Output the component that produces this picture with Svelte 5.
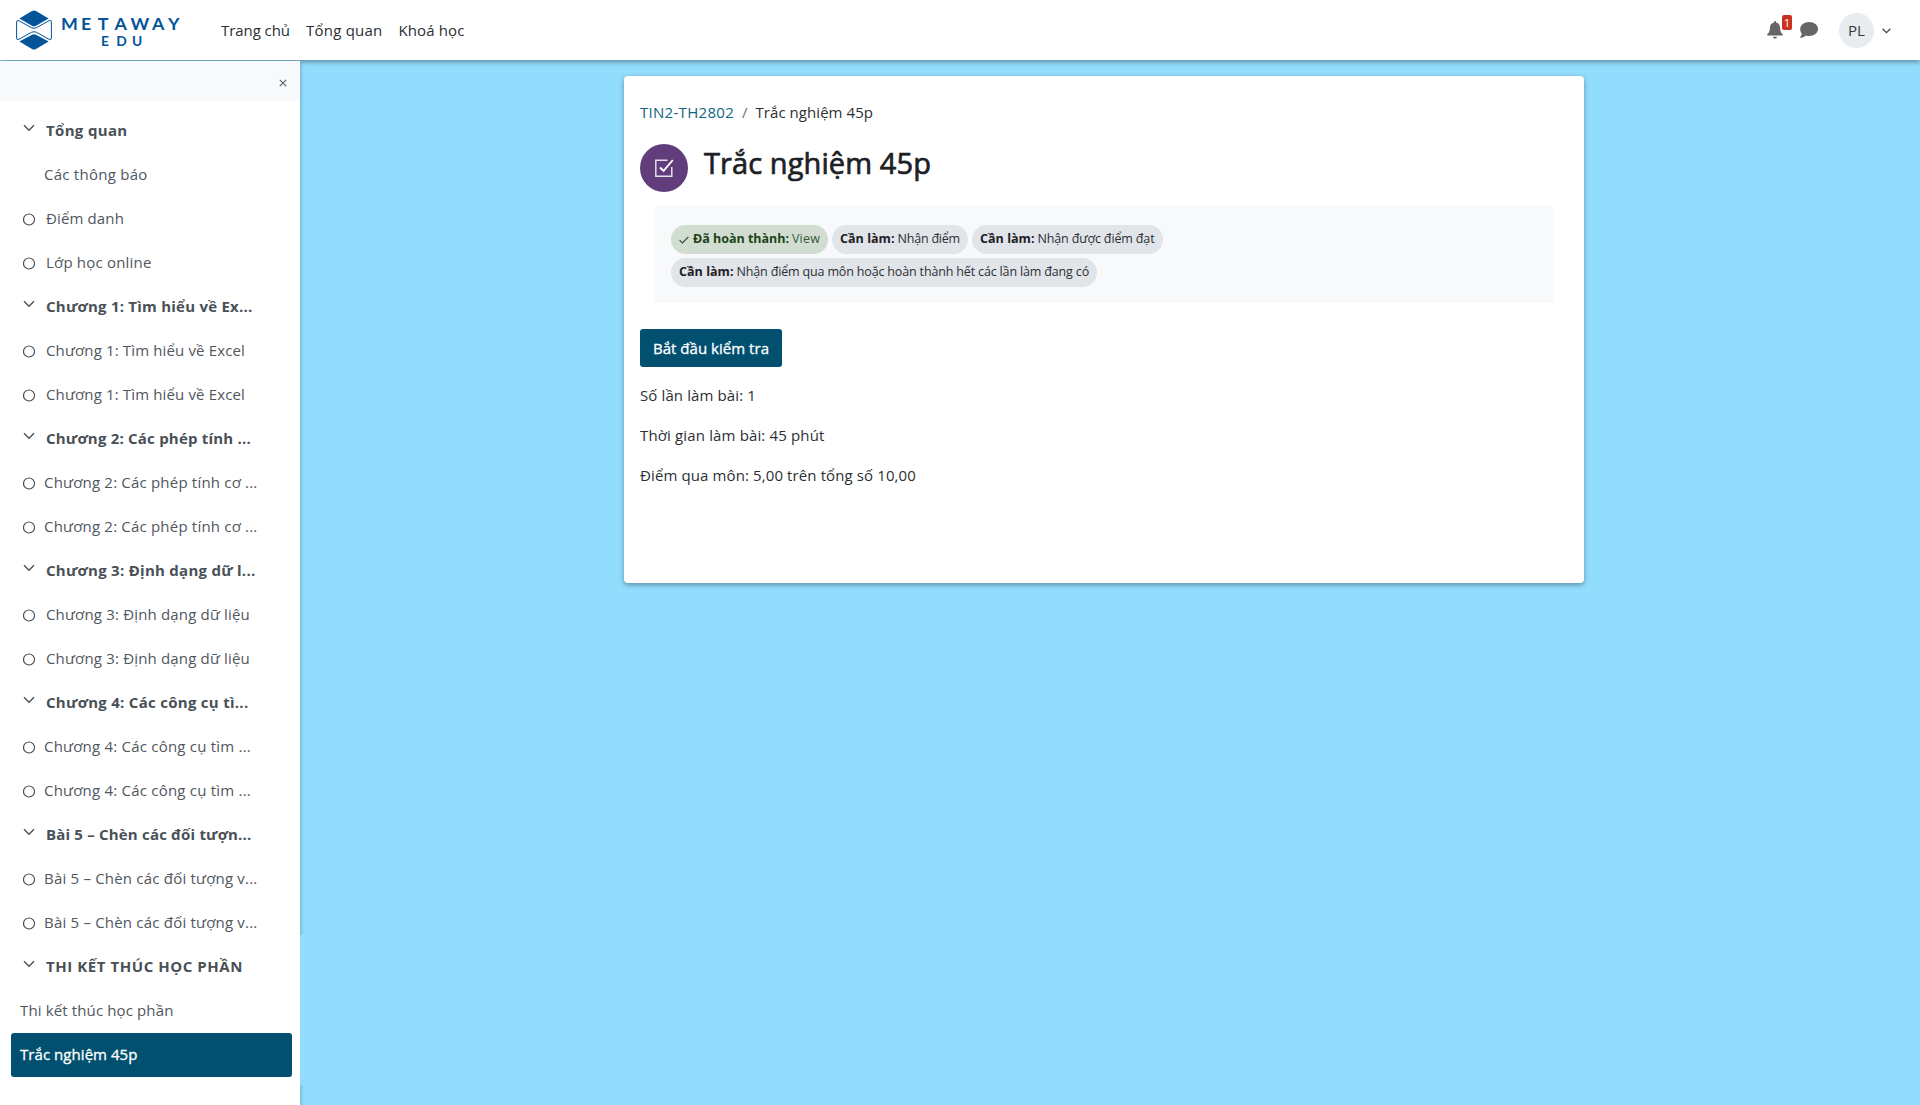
<script>
  // Spreads a label evenly over the given width in pixels.
  function span(node, width) {
    const natural = node.getBoundingClientRect().width;
    const count = [...node.textContent].length;
    node.style.letterSpacing = `${(width - natural) / count}px`;
  }

  const nav = [
    { text: 'Trang chủ', w: 69 },
    { text: 'Tổng quan', w: 76.5 },
    { text: 'Khoá học', w: 66 }
  ];

  const rows = [
    { kind: 'section', text: 'Tổng quan', w: 81.5 },
    { kind: 'plain', text: 'Các thông báo', w: 103.5 },
    { kind: 'todo', text: 'Điểm danh', w: 78 },
    { kind: 'todo', text: 'Lớp học online', w: 105.5 },
    { kind: 'section', text: 'Chương 1: Tìm hiểu về Ex...', w: 206.5 },
    { kind: 'todo', text: 'Chương 1: Tìm hiểu về Excel', w: 199 },
    { kind: 'todo', text: 'Chương 1: Tìm hiểu về Excel', w: 199 },
    { kind: 'section', text: 'Chương 2: Các phép tính ...', w: 205 },
    { kind: 'todo tight', text: 'Chương 2: Các phép tính cơ ...', w: 213.5 },
    { kind: 'todo tight', text: 'Chương 2: Các phép tính cơ ...', w: 213.5 },
    { kind: 'section', text: 'Chương 3: Định dạng dữ l...', w: 209.5 },
    { kind: 'todo', text: 'Chương 3: Định dạng dữ liệu', w: 204 },
    { kind: 'todo', text: 'Chương 3: Định dạng dữ liệu', w: 204 },
    { kind: 'section', text: 'Chương 4: Các công cụ tì...', w: 202.5 },
    { kind: 'todo tight', text: 'Chương 4: Các công cụ tìm ...', w: 207 },
    { kind: 'todo tight', text: 'Chương 4: Các công cụ tìm ...', w: 207 },
    { kind: 'section', text: 'Bài 5 – Chèn các đối tượn...', w: 205.5 },
    { kind: 'todo tight', text: 'Bài 5 – Chèn các đối tượng v...', w: 213.5 },
    { kind: 'todo tight', text: 'Bài 5 – Chèn các đối tượng v...', w: 213.5 },
    { kind: 'section', text: 'THI KẾT THÚC HỌC PHẦN', w: 197 },
    { kind: 'bare', text: 'Thi kết thúc học phần', w: 153.5 },
    { kind: 'bare active', text: 'Trắc nghiệm 45p', w: 117.5 }
  ];

  const badges = [
    [
      { done: true, label: 'Đã hoàn thành:', lw: 96, text: 'View', w: 28 },
      { label: 'Cần làm:', lw: 54.5, text: 'Nhận điểm', w: 62.5 },
      { label: 'Cần làm:', lw: 54.5, text: 'Nhận được điểm đạt', w: 117 }
    ],
    [
      { label: 'Cần làm:', lw: 54.5, text: 'Nhận điểm qua môn hoặc hoàn thành hết các lần làm đang có', w: 352.5 }
    ]
  ];

  const info = [
    { text: 'Số lần làm bài: 1', w: 116 },
    { text: 'Thời gian làm bài: 45 phút', w: 184.5 },
    { text: 'Điểm qua môn: 5,00 trên tổng số 10,00', w: 276 }
  ];
</script>

<div class="page">
  <header class="topbar">
    <svg class="logo" width="168" height="42" viewBox="0 0 168 42">
      <g fill="#04549a">
        <path d="M3.4 9.600 16 2Q18 .9 20 2L32.600 9.600 20 16.800Q18 17.900 16 16.800Z" />
        <path d="M3.400 32.400 16 25.700Q18 24.700 20 25.700L32.600 32.400 20 40Q18 41.100 16 40Z" />
      </g>
      <path fill="none" stroke="#04549a" stroke-width="1" stroke-linejoin="round" d="M2.900 11.700Q.6 10.600 .6 13V29Q.6 31.400 2.900 30.300L15.500 23.300Q18 22.100 20.500 23.300L33.100 30.300Q35.400 31.400 35.400 29V13Q35.400 10.600 33.100 11.700L20.500 18.700Q18 19.900 15.500 18.700Z" />
      <g fill="#04549a" font-family="Lato, sans-serif" font-weight="700" transform="scale(1.08 1)">
        <text x="41.7 60.2 75.7 91.2 106 125.900 140.700" y="21.400" font-size="16.500">METAWAY</text>
        <text x="78.700 92.900 107.400" y="37.400" font-size="12.800">EDU</text>
      </g>
    </svg>
    <nav>
      {#each nav as n}
        <a href="#top"><span use:span={n.w}>{n.text}</span></a>
      {/each}
    </nav>
    <div class="tools">
      <div class="bell">
        <svg width="16" height="18" viewBox="0 0 16 18" fill="#656565">
          <path d="M8 0c.7 0 1 .5 1 1v.6c2.5.5 4.100 2.400 4.100 5.200 0 3.100.8 4.900 2.500 6.300.5.5.2 1.300-.5 1.300H.9c-.7 0-1-.8-.5-1.300 1.700-1.400 2.500-3.200 2.500-6.300 0-2.800 1.600-4.700 4.100-5.200V1c0-.5.3-1 1-1zM5.900 15.800h4.200c-.2 1.200-1 1.800-2.100 1.800s-1.900-.6-2.100-1.800z" />
        </svg>
        <span class="count">1</span>
      </div>
      <svg class="chat" width="18" height="16" viewBox="0 0 18 16" fill="#656565">
        <path d="M9.200 0C14.100 0 18 3.100 18 7s-3.900 7-8.800 7c-1.300 0-2.500-.2-3.600-.6C4.300 14.700 2.500 15.800.3 15.800c-.3 0-.4-.3-.2-.5.900-1 1.500-2.200 1.700-3.500C.8 10.500.2 8.800.2 7 .2 3.100 4.300 0 9.200 0z" />
      </svg>
      <div class="avatar"><span use:span={17}>PL</span></div>
      <svg class="caret" width="9" height="6" viewBox="0 0 9 6" fill="none" stroke="#444b51" stroke-width="1.300"><path d="M.6.8 4.500 4.700 8.400.8" /></svg>
    </div>
  </header>

  <div class="body">
    <aside>
      <div class="drawer-head">
        <svg width="8" height="8" viewBox="0 0 8 8" stroke="#5d656d" stroke-width="1.200"><path d="M.8.8 7.200 7.200M7.200.8.8 7.200" /></svg>
      </div>
      <ul>
        {#each rows as r}
          <li class={r.kind}>
            {#if r.kind === 'section'}
              <svg class="chev" width="12" height="8" viewBox="0 0 12 8" fill="none" stroke="#495057" stroke-width="1.400"><path d="M1 1.200 6 6.200 11 1.200" /></svg>
            {:else if r.kind.startsWith('todo')}
              <svg class="ring" width="13" height="13" viewBox="0 0 13 13" fill="none" stroke="#495057" stroke-width="1.200"><circle cx="6" cy="6.500" r="5.500" /></svg>
            {/if}
            <span use:span={r.w}>{r.text}</span>
          </li>
        {/each}
      </ul>
      <div class="edge"></div>
    </aside>

    <main>
      <div class="card">
        <div class="crumbs">
          <a href="#course"><span use:span={94}>TIN2-TH2802</span></a>
          <i>/</i>
          <span use:span={117.500}>Trắc nghiệm 45p</span>
        </div>
        <div class="title">
          <div class="disc">
            <svg width="20" height="20" viewBox="0 0 20 20" fill="none" stroke="#fff" stroke-width="1.500">
              <path d="M13.500 2.200H1.800V18.200H17.800V9" stroke="#e6dfeb" />
              <path d="M6 9.500 9.600 12.800 18.800 2" stroke-width="1.900" />
            </svg>
          </div>
          <h1><span use:span={227}>Trắc nghiệm 45p</span></h1>
        </div>
        <div class="completion">
          {#each badges as line}
            <div class="line">
              {#each line as b}
                <div class="badge" class:done={b.done}>
                  {#if b.done}
                    <svg width="10" height="8" viewBox="0 0 10 8" fill="none" stroke="#2c4a26" stroke-width="1.200"><path d="M.6 4.200 3.400 7 9.400.8" /></svg>
                  {/if}
                  <b><span use:span={b.lw}>{b.label}</span></b>
                  <span use:span={b.w}>{b.text}</span>
                </div>
              {/each}
            </div>
          {/each}
        </div>
        <button><span use:span={116}>Bắt đầu kiểm tra</span></button>
        {#each info as p}
          <p><span use:span={p.w}>{p.text}</span></p>
        {/each}
      </div>
    </main>
  </div>
</div>

<style>
  :global(body) {
    background: #92dcfd;
    overflow: hidden;
  }
  .page {
    display: flex;
    flex-direction: column;
    height: 1105px;
    font: 400 15px/24px 'Open Sans', 'Noto Sans', sans-serif;
    color: #2b2f33;
  }
  span {
    display: inline-block;
    white-space: nowrap;
  }
  a {
    color: inherit;
    text-decoration: none;
  }
  .topbar {
    position: relative;
    z-index: 2;
    flex: none;
    box-sizing: border-box;
    height: 60px;
    display: flex;
    align-items: center;
    background: #fff;
    box-shadow: 0 2px 5px rgba(0, 0, 0, 0.36);
    padding-left: 16px;
  }
  .logo {
    flex: none;
    margin-top: -1px;
  }
  nav {
    display: flex;
    gap: 16px;
    margin-left: 37px;
  }
  .tools {
    display: flex;
    align-items: center;
    margin-left: auto;
    padding-right: 29px;
  }
  .bell {
    position: relative;
    width: 16px;
    height: 18px;
    margin-right: 17px;
  }
  .bell svg,
  .chat,
  .caret {
    display: block;
  }
  .count {
    position: absolute;
    left: 15px;
    top: -6px;
    width: 10px;
    height: 15px;
    border-radius: 2px;
    background: #ca3120;
    color: #fff;
    font-size: 11.5px;
    line-height: 15px;
    text-align: center;
  }
  .avatar {
    width: 35px;
    height: 35px;
    border-radius: 50%;
    background: #e9ecef;
    margin-left: 21px;
    display: flex;
    align-items: center;
    justify-content: center;
    color: #343a40;
  }
  .caret {
    margin: 2px 0 0 8px;
  }
  .body {
    flex: 1;
    display: flex;
    min-height: 0;
  }
  aside {
    position: relative;
    flex: none;
    width: 300px;
    margin-top: 1px;
    background: #fff;
    border-radius: 0 2px 0 0;
    box-shadow: 0 2px 4px rgba(0, 0, 0, 0.32);
    z-index: 3;
    clip-path: inset(0 -8px 0 0);
  }
  .drawer-head {
    height: 40px;
    background: #f8f9fa;
    display: flex;
    align-items: center;
    justify-content: flex-end;
    padding-right: 13.5px;
    box-sizing: border-box;
    padding-top: 3px;
  }
  .edge {
    position: absolute;
    left: 300px;
    top: 874px;
    width: 6px;
    height: 150px;
    background: #92dcfd;
  }
  ul {
    list-style: none;
    margin: 0;
    padding: 8px 8px 0 11px;
  }
  li {
    height: 44px;
    display: flex;
    align-items: center;
    color: #50575e;
    padding: 0 0 2px 9px;
    box-sizing: border-box;
  }
  .section {
    font-weight: 700;
    padding-left: 12px;
    color: #495057;
  }
  .chev {
    margin: 0 11px 4px 0;
  }
  .plain {
    padding-left: 33px;
  }
  .todo {
    padding-left: 11px;
  }
  .ring {
    margin: 3px 10px 0 1px;
  }
  .tight .ring {
    margin-right: 8px;
  }
  .active {
    background: #01506f;
    color: #fff;
    border-radius: 3px;
    -webkit-text-stroke: 0.3px #fff;
  }
  main {
    flex: 1;
    padding: 16px 0 0 324px;
  }
  .card {
    box-sizing: border-box;
    width: 960px;
    height: 507px;
    background: #fff;
    border-radius: 4px;
    box-shadow: 0 2px 5px rgba(0, 0, 0, 0.34);
    padding: 24px 16px 0;
  }
  .crumbs {
    display: flex;
    gap: 8px;
  }
  .crumbs a {
    color: #0f6583;
  }
  .crumbs i {
    font-style: normal;
    color: #6a737b;
  }
  .title {
    display: flex;
    align-items: flex-start;
    gap: 16px;
    margin-top: 20px;
  }
  .disc {
    width: 48px;
    height: 48px;
    border-radius: 50%;
    background: #613d7c;
    display: flex;
    align-items: center;
    justify-content: center;
  }
  .disc svg {
    display: block;
    margin-top: -1px;
  }
  h1 {
    margin: 0;
    font-size: 29px;
    font-weight: 400;
    line-height: 38px;
    color: #1d2125;
    -webkit-text-stroke: 0.7px #1d2125;
  }
  .completion {
    box-sizing: border-box;
    margin: 13px 15px 0;
    height: 98px;
    padding: 20px 16px;
    background: #f8f9fb;
    border-radius: 3px;
    display: flex;
    flex-direction: column;
    gap: 4px;
    font-size: 12.5px;
  }
  .line {
    display: flex;
    gap: 4px;
  }
  .badge {
    height: 29px;
    border-radius: 15px;
    padding: 0 8px 2px;
    box-sizing: border-box;
    display: flex;
    align-items: center;
    gap: 3px;
    background: #e1e4e9;
  }
  .badge b {
    color: #1d2125;
  }
  .badge.done {
    background: #d1ddd1;
    color: #35583a;
  }
  .badge.done b {
    color: #1c4419;
  }
  .badge svg {
    margin: 2px 1px 0 0;
  }
  button {
    display: block;
    margin: 26px 0 16px;
    width: 142px;
    height: 38px;
    padding: 0;
    border: 0;
    border-radius: 3px;
    background: #01506f;
    color: #fff;
    font: inherit;
    -webkit-text-stroke: 0.3px #fff;
  }
  p {
    margin: 0 0 16px;
  }
</style>
